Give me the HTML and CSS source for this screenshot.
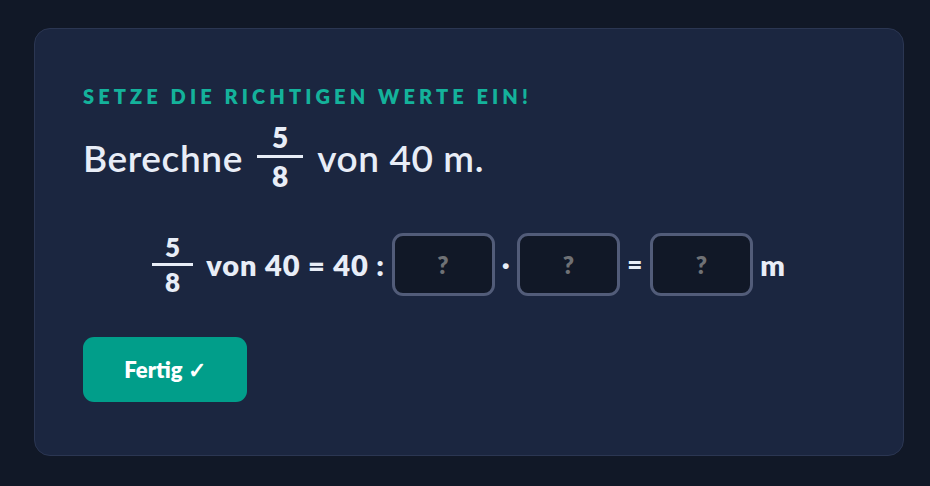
FILE: index.html
```html
<!DOCTYPE html>
<html lang="de">
<head>
<meta charset="utf-8">
<link rel="stylesheet" href="styles.css">
</head>
<body>
<div class="card">
  <div class="label">SETZE DIE RICHTIGEN WERTE EIN!</div>
  <div class="question">
    <span>Berechne</span>
    <span class="frac big"><span class="num">5</span><span class="den">8</span></span>
    <span>von 40 m.</span>
  </div>
  <div class="equation">
    <span class="frac small"><span class="num">5</span><span class="den">8</span></span>
    <span class="txt">von 40 = 40 :</span>
    <span class="box">?</span>
    <span class="op">·</span>
    <span class="box">?</span>
    <span class="op">=</span>
    <span class="box">?</span>
    <span class="txt">m</span>
  </div>
  <button class="done">Fertig ✓</button>
</div>
</body>
</html>
```
FILE: styles.css
```css
html, body { margin: 0; padding: 0; }
body {
  background: #111827;
  width: 930px;
  height: 486px;
  font-family: "Lato", "Noto Sans", sans-serif;
  color: #e8edf7;
  padding-top: 28px;
  padding-left: 34px;
  box-sizing: border-box;
}
.card {
  width: 870px;
  height: 428px;
  box-sizing: border-box;
  background: #1b2640;
  border: 1px solid #2b3652;
  border-radius: 16px;
  padding: 55px 48px 0 48px;
}
.label {
  color: #14b29b;
  font-weight: 800;
  font-size: 20px;
  letter-spacing: 4.1px;
  line-height: 24px;
}
.question {
  display: flex;
  align-items: center;
  gap: 14px;
  margin-top: 14px;
  font-size: 37px;
  font-weight: 600;
  letter-spacing: 0.6px;
  height: 70px;
}
.frac {
  display: inline-flex;
  flex-direction: column;
  align-items: center;
  font-weight: 800;
  letter-spacing: 0;
}
.frac .num { border-bottom: 3px solid #e8edf7; }
.frac.big { font-size: 28px; line-height: 31px; }
.frac.big .num { padding: 0 15px 2px; }
.frac.big .den { padding-top: 3px; }
.frac.small { font-size: 26px; line-height: 28px; }
.frac.small .num { padding: 0 13px 2px; }
.frac.small .den { padding-top: 2px; }
.equation {
  display: flex;
  justify-content: center;
  align-items: center;
  gap: 7px;
  margin-top: 40px;
  font-size: 29px;
  font-weight: 800;
  height: 64px;
  letter-spacing: 0.9px;
}
.equation .frac { margin-right: 6px; }
.box {
  width: 103px;
  height: 63px;
  box-sizing: border-box;
  border: 3px solid #525c79;
  border-radius: 11px;
  background: #111827;
  color: #6f7175;
  font-size: 24px;
  font-weight: 800;
  display: flex;
  align-items: center;
  justify-content: center;
}
.op { font-size: 26px; }
.done {
  margin-top: 41px;
  width: 164px;
  height: 65px;
  border: none;
  border-radius: 11px;
  background: #019e8a;
  color: #ffffff;
  font-family: "Lato", "Noto Sans", sans-serif;
  font-size: 22px;
  font-weight: 800;
  letter-spacing: 0;
}
```
